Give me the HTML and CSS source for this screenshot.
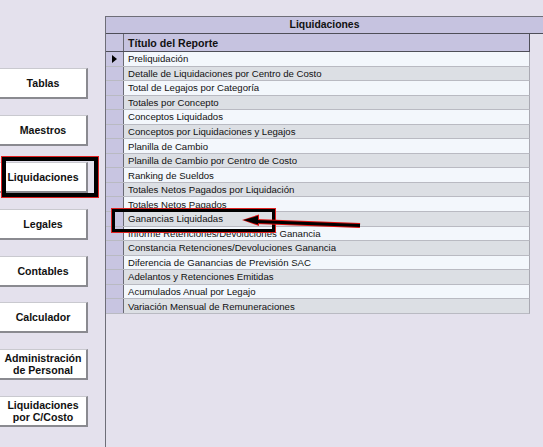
FILE: index.html
```html
<!DOCTYPE html>
<html lang="es">
<head>
<meta charset="utf-8">
<title>Liquidaciones</title>
<link rel="stylesheet" href="styles.css">
</head>
<body>
<div class="app">
  <aside class="sidebar">
    <button class="btn">Tablas</button>
    <button class="btn">Maestros</button>
    <button class="btn">Liquidaciones</button>
    <button class="btn">Legales</button>
    <button class="btn">Contables</button>
    <button class="btn">Calculador</button>
    <button class="btn">Administración<br>de Personal</button>
    <button class="btn">Liquidaciones<br>por C/Costo</button>
  </aside>
  <section class="panel">
    <div class="titlebar">Liquidaciones</div>
    <div class="grid">
      <div class="row head"><div class="ind"></div><div class="cell">Título del Reporte</div></div>
      <div class="row"><div class="ind"><span class="tri"></span></div><div class="cell">Preliquidación</div></div>
      <div class="row alt"><div class="ind"></div><div class="cell">Detalle de Liquidaciones por Centro de Costo</div></div>
      <div class="row"><div class="ind"></div><div class="cell">Total de Legajos por Categoría</div></div>
      <div class="row alt"><div class="ind"></div><div class="cell">Totales por Concepto</div></div>
      <div class="row"><div class="ind"></div><div class="cell">Conceptos Liquidados</div></div>
      <div class="row alt"><div class="ind"></div><div class="cell">Conceptos por Liquidaciones y Legajos</div></div>
      <div class="row"><div class="ind"></div><div class="cell">Planilla de Cambio</div></div>
      <div class="row alt"><div class="ind"></div><div class="cell">Planilla de Cambio por Centro de Costo</div></div>
      <div class="row"><div class="ind"></div><div class="cell">Ranking de Sueldos</div></div>
      <div class="row alt"><div class="ind"></div><div class="cell">Totales Netos Pagados por Liquidación</div></div>
      <div class="row"><div class="ind"></div><div class="cell">Totales Netos Pagados</div></div>
      <div class="row alt"><div class="ind"></div><div class="cell">Ganancias Liquidadas</div></div>
      <div class="row"><div class="ind"></div><div class="cell">Informe Retenciones/Devoluciones Ganancia</div></div>
      <div class="row alt"><div class="ind"></div><div class="cell">Constancia Retenciones/Devoluciones Ganancia</div></div>
      <div class="row"><div class="ind"></div><div class="cell">Diferencia de Ganancias de Previsión SAC</div></div>
      <div class="row alt"><div class="ind"></div><div class="cell">Adelantos y Retenciones Emitidas</div></div>
      <div class="row"><div class="ind"></div><div class="cell">Acumulados Anual por Legajo</div></div>
      <div class="row alt"><div class="ind"></div><div class="cell">Variación Mensual de Remuneraciones</div></div>
    </div>
  </section>

  <div class="mark mark-btn"></div>
  <div class="mark mark-row"></div>
  <svg class="arrow" width="130" height="20" viewBox="0 0 130 20">
    <path d="M14 8.5 L118 12.5" stroke="#d11" stroke-width="5" fill="none"/>
    <path d="M0 7 L17 1.5 L17 13 Z" fill="#d11"/>
    <path d="M14 8.5 L118 12.5" stroke="#000" stroke-width="3" fill="none"/>
    <path d="M1.5 7 L16 2.8 L16 11.6 Z" fill="#000"/>
  </svg>
</div>
</body>
</html>
```

FILE: styles.css
```css
html, body {
  margin: 0;
  padding: 0;
  background: #e4e1ed;
}

.app {
  position: relative;
  display: flex;
  width: 543px;
  height: 447px;
  overflow: hidden;
  font-family: "Liberation Sans", Arial, sans-serif;
}

.sidebar {
  width: 105px;
  flex: none;
  display: flex;
  flex-direction: column;
  gap: 15.9px;
  padding-top: 68px;
  box-sizing: border-box;
}

.btn {
  width: 89px;
  height: 31px;
  margin-left: -1px;
  padding: 0;
  background: #ffffff;
  border-top: 1px solid #c9c9cf;
  border-left: 1px solid #c9c9cf;
  border-right: 2px solid #8a8a90;
  border-bottom: 2px solid #8a8a90;
  font-family: "Liberation Sans", Arial, sans-serif;
  font-weight: bold;
  font-size: 10.6px;
  line-height: 12px;
  color: #111;
  text-align: center;
}

.panel {
  flex: 1;
  margin-top: 16px;
  border-left: 1px solid #6e6e78;
  border-top: 1px solid #6e6e78;
  display: flex;
  flex-direction: column;
}

.titlebar {
  height: 16px;
  background: #c6c3e0;
  border-bottom: 1px solid #4e4e58;
  font-weight: bold;
  font-size: 10.4px;
  line-height: 16px;
  text-align: center;
  color: #111;
}

.grid {
  width: 424px;
  display: flex;
  flex-direction: column;
}

.row {
  display: flex;
  height: 14.56px;
  box-sizing: border-box;
  border-bottom: 1px solid #b9bac2;
  border-right: 1px solid #a9a9b2;
  background: #f3f7fc;
  font-size: 9.6px;
  color: #111;
}

.row.alt {
  background: #dcdfe4;
}

.row.head {
  height: 18px;
  background: #c6c3e0;
  border-bottom: 1px solid #4e4e58;
  border-right: 1px solid #4e4e58;
  font-weight: bold;
  font-size: 10.6px;
}

.ind {
  width: 17px;
  flex: none;
  background: #c8c5e1;
  border-right: 1px solid #6a6a74;
  display: flex;
  align-items: center;
  justify-content: center;
}

.cell {
  flex: 1;
  padding-left: 4px;
  display: flex;
  align-items: center;
  white-space: nowrap;
}

.tri {
  width: 0;
  height: 0;
  border-left: 5px solid #000;
  border-top: 4px solid transparent;
  border-bottom: 4px solid transparent;
}

.mark {
  position: absolute;
  box-sizing: border-box;
  border-style: solid;
  border-color: #000;
  outline: 1px solid #e02020;
}

.mark-btn {
  left: 2px;
  top: 157px;
  width: 96px;
  height: 40px;
  border-width: 4px;
}

.mark-row {
  left: 112px;
  top: 209px;
  width: 163px;
  height: 23px;
  border-width: 3px;
}

.arrow {
  position: absolute;
  left: 242px;
  top: 213px;
}
```
